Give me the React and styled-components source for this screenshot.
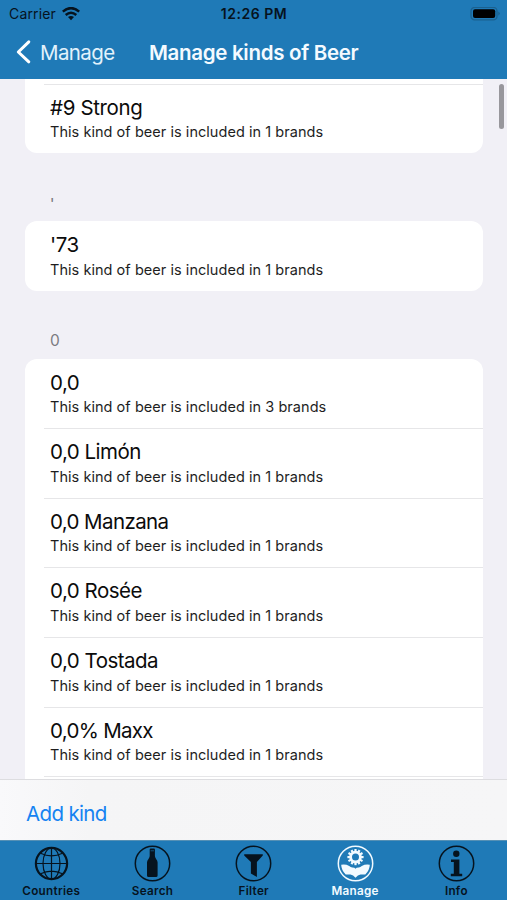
import React from "react";
import styled, { createGlobalStyle } from "styled-components";

const GlobalStyle = createGlobalStyle`
  * { box-sizing: border-box; }
  html, body { margin: 0; padding: 0; }
  body { font-family: Inter, "Liberation Sans", sans-serif; overflow: hidden; }
`;

const Screen = styled.main`
  width: 507px;
  height: 900px;
  display: flex;
  flex-direction: column;
  background: #f1f0f6;
  overflow: hidden;
`;

const Header = styled.header`
  flex: 0 0 79.3px;
  background: #1f7ab7;
`;

const StatusBar = styled.div`
  height: 27px;
  padding: 0 6px 0 9px;
  display: grid;
  grid-template-columns: 1fr auto 1fr;
  align-items: center;
  color: #06131e;
  font-size: 14px;
  line-height: 27px;
`;

const Carrier = styled.div`
  display: flex;
  align-items: center;
  gap: 6px;
  letter-spacing: 0.15px;
`;

const Clock = styled.time`
  font-weight: 600;
  letter-spacing: 0.55px;
  margin-right: 2px;
`;

const BatteryBox = styled.div`
  display: flex;
  justify-content: flex-end;
`;

const NavBar = styled.nav`
  height: 50px;
  display: flex;
  align-items: center;
  padding-left: 16px;
  color: #f4faff;
`;

const Back = styled.a`
  display: flex;
  align-items: center;
  gap: 8px;
  width: 133px;
  font-size: 20.5px;
  letter-spacing: -0.6px;
  color: #e2f2fc;
`;

const Title = styled.h1`
  margin: 0;
  font-size: 20.5px;
  font-weight: 600;
  letter-spacing: -0.3px;
  white-space: nowrap;
`;

const ListArea = styled.section`
  flex: 1;
  min-height: 0;
  position: relative;
  overflow: hidden;
  padding: 0 24.5px 0 25px;
`;

const ScrollThumb = styled.div`
  position: absolute;
  top: 5px;
  right: 3px;
  width: 5px;
  height: 45px;
  border-radius: 3px;
  background: #98979c;
`;

const Card = styled.ul`
  margin: 0;
  padding: 0;
  list-style: none;
  background: #fff;
  border-radius: ${(p) => (p.$continued ? "0 0 12px 12px" : "12px")};
  padding-top: ${(p) => (p.$continued ? "4.5px" : "0")};
  overflow: hidden;
`;

const Row = styled.li`
  height: 69.6px;
  padding: 11px 0 0 6px;
  margin-left: 19px;
  border-top: 1.3px solid ${(p) => (p.$divided ? "#e6e6e8" : "transparent")};
  white-space: nowrap;
`;

const Kind = styled.div`
  font-size: 20.5px;
  line-height: 24px;
  letter-spacing: ${(p) => p.$spacing || "-0.5px"};
  color: #0b0b0b;
`;

const Detail = styled.div`
  font-size: 14.5px;
  line-height: 18px;
  padding-top: 3.6px;
  height: 22px;
  letter-spacing: 0.045px;
  color: #1e1e1e;
`;

const SectionHeading = styled.h2`
  margin: 0;
  height: 67.8px;
  padding: ${(p) => (p.$mark ? "41px" : "40.5px")} 0 0 25px;
  font-size: ${(p) => (p.$mark ? "14px" : "15.5px")};
  line-height: 20px;
  font-weight: ${(p) => (p.$mark ? 500 : 400)};
  color: #7c7b81;
`;

const Toolbar = styled.div`
  flex: 0 0 61px;
  display: flex;
  align-items: center;
  padding: 6px 0 0 26px;
  border-top: 1.5px solid #dddde0;
  background: linear-gradient(90deg, #f9f9fb 0, #f5f5f6 90px, #f6f6f7 100%);
`;

const AddButton = styled.button`
  border: 0;
  padding: 0;
  background: none;
  font: inherit;
  font-size: 20.5px;
  letter-spacing: -0.65px;
  color: #1683f2;
`;

const TabBar = styled.footer`
  flex: 0 0 60px;
  display: grid;
  grid-template-columns: repeat(5, 1fr);
  padding-left: 0.6px;
  background: #1f7ab7;
  border-top: 1px solid #5590b5;
`;

const Tab = styled.a`
  display: flex;
  flex-direction: column;
  align-items: center;
  padding-top: 4px;
  color: ${(p) => (p.$active ? "#f2faff" : "#06131e")};
  font-size: 11.7px;
  font-weight: 600;
  line-height: 14px;
  letter-spacing: 0.3px;

  svg { margin-bottom: 2px; }
`;

const Svg = styled.svg`
  display: block;
  flex: none;
`;

const Ring = () => <circle cx="18.5" cy="18.5" r="17.2" fill="none" stroke="currentColor" strokeWidth="1.5" />;

const TabIcon = ({ children }) => (
  <Svg width="37" height="37" viewBox="0 0 37 37">{children}</Svg>
);

const GlobeIcon = () => (
  <TabIcon>
    <g fill="none" stroke="currentColor" strokeWidth="1.2">
      <circle cx="18.5" cy="18.5" r="15.6" strokeWidth="2.2" />
      <ellipse cx="18.5" cy="18.5" rx="8.5" ry="15.5" />
      <path d="M18.5 3v31M3 18.5h31M7.5 8.3Q18.5 13.5 29.5 8.3M7.5 28.7Q18.5 23.5 29.5 28.7" />
    </g>
  </TabIcon>
);

const BottleIcon = () => (
  <TabIcon>
    <Ring />
    <path fill="currentColor" d="M15.7 4.5Q15.7 3.5 16.6 3.5h3.4q.9 0 .9 1v6.6q0 1.3 1.2 2.8 1.5 1.8 1.5 3.6v12.9q0 1.6-1.6 1.6h-7.4q-1.6 0-1.6-1.6V17.5q0-1.8 1.5-3.6 1.2-1.5 1.2-2.8z" />
    <path d="M16.6 5.8h3.4" stroke="#1f7ab7" strokeWidth=".6" />
  </TabIcon>
);

const FunnelIcon = () => (
  <TabIcon>
    <Ring />
    <path fill="currentColor" d="M9.2 9.2h18.6v1.4L21.9 17v15l-6-3.5V17l-6.7-6.4z" />
  </TabIcon>
);

const GearHandsIcon = () => {
  const teeth = Array.from({ length: 12 }, (_, i) => i * 30);
  return (
    <TabIcon>
      <Ring />
      <circle cx="18.5" cy="12.1" r="4.9" fill="none" stroke="currentColor" strokeWidth="2.8" />
      {teeth.map((angle) => (
        <rect key={angle} x="17.4" y="4" width="2.2" height="3" fill="currentColor" transform={`rotate(${angle} 18.5 12.1)`} />
      ))}
      <path fill="currentColor" d="M4.2 19.7q4.3-.9 8 1.2 1.4 1.4 3 1.5 2.4-.1 3.3 1.3.9-1.4 3.3-1.3 1.6-.1 3-1.5 3.7-2.1 8-1.2-.2 5.6-4.5 9.7-3 .1-4.8.1-2.7.4-5 3.2-2.3-2.8-5-3.2-1.8 0-4.8-.1-4.3-4.1-4.5-9.7z" />
    </TabIcon>
  );
};

const InfoIcon = () => (
  <TabIcon>
    <Ring />
    <circle cx="18.3" cy="8.8" r="3.2" fill="currentColor" />
    <path fill="currentColor" d="M13 14.6h8.4v14.2h2.8v2.5H12.8v-2.5h3V17.1H13z" />
  </TabIcon>
);

const WifiIcon = () => (
  <Svg width="18" height="14" viewBox="0 0 18 14">
    <g fill="none" stroke="currentColor" strokeWidth="2.5">
      <path d="M.8 4.6q8.2-7 16.4 0" />
      <path d="M3.7 8q5.3-4.5 10.6 0" />
    </g>
    <path fill="currentColor" d="M6 10.1q3-2.4 6 0l-3 3.1z" />
  </Svg>
);

const BatteryIcon = () => (
  <Svg width="31" height="14" viewBox="0 0 31 14">
    <rect x="1" y=".4" width="26" height="12.4" rx="3.6" fill="none" stroke="#1b618f" strokeWidth="1.3" />
    <rect x="3" y="2.2" width="22.2" height="8.8" rx="2" fill="#000" />
    <path d="M28.3 4.4q3 2.2 0 4.4z" fill="#1b618f" />
  </Svg>
);

const ChevronIcon = () => (
  <Svg width="16" height="26" viewBox="0 0 16 26">
    <path d="M12.8 2.8 2.3 13l10.5 9.8" fill="none" stroke="#fff" strokeWidth="3" strokeLinecap="round" strokeLinejoin="round" />
  </Svg>
);

const sections = [
  { continued: true, kinds: [{ name: "#9 Strong", brands: 1, spacing: "-0.35px" }] },
  { heading: "'", mark: true, kinds: [{ name: "'73", brands: 1 }] },
  {
    heading: "0",
    kinds: [
      { name: "0,0", brands: 3 },
      { name: "0,0 Limón", brands: 1 },
      { name: "0,0 Manzana", brands: 1, spacing: "-0.6px" },
      { name: "0,0 Rosée", brands: 1 },
      { name: "0,0 Tostada", brands: 1 },
      { name: "0,0% Maxx", brands: 1, spacing: "-0.7px" },
      {},
    ],
  },
];

const tabs = [
  { label: "Countries", Icon: GlobeIcon },
  { label: "Search", Icon: BottleIcon },
  { label: "Filter", Icon: FunnelIcon },
  { label: "Manage", Icon: GearHandsIcon, active: true },
  { label: "Info", Icon: InfoIcon },
];

export default function App() {
  return (
    <Screen>
      <GlobalStyle />
      <Header>
        <StatusBar>
          <Carrier>Carrier <WifiIcon /></Carrier>
          <Clock>12:26 PM</Clock>
          <BatteryBox><BatteryIcon /></BatteryBox>
        </StatusBar>
        <NavBar>
          <Back><ChevronIcon />Manage</Back>
          <Title>Manage kinds of Beer</Title>
        </NavBar>
      </Header>
      <ListArea>
        {sections.map(({ heading, mark, continued, kinds }, index) => (
          <React.Fragment key={index}>
            {heading && <SectionHeading $mark={mark}>{heading}</SectionHeading>}
            <Card $continued={continued}>
              {kinds.map(({ name, brands, spacing }, i) => (
                <Row key={i} $divided={continued || i > 0}>
                  {name && <Kind $spacing={spacing}>{name}</Kind>}
                  {name && <Detail>This kind of beer is included in {brands} brands</Detail>}
                </Row>
              ))}
            </Card>
          </React.Fragment>
        ))}
        <ScrollThumb />
      </ListArea>
      <Toolbar><AddButton>Add kind</AddButton></Toolbar>
      <TabBar>
        {tabs.map(({ label, Icon, active }) => (
          <Tab key={label} $active={active}><Icon />{label}</Tab>
        ))}
      </TabBar>
    </Screen>
  );
}
